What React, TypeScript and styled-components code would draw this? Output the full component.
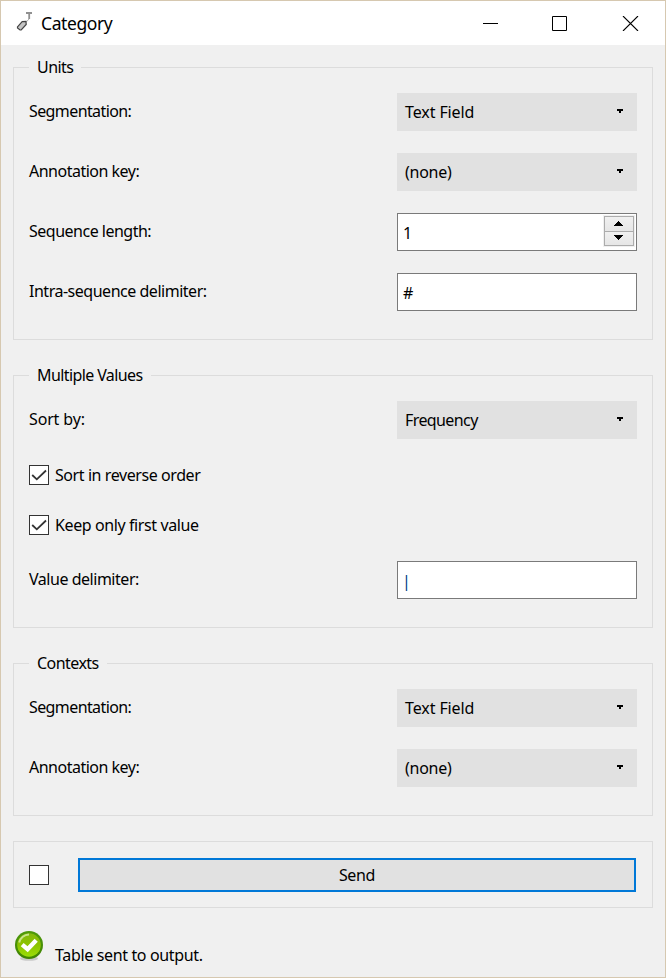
import React, { ReactNode } from "react";
import styled, { createGlobalStyle, css } from "styled-components";

const GlobalStyle = createGlobalStyle`
  *, *::before, *::after { box-sizing: border-box; }
  body { margin: 0; background: #f0f0f0; }
`;

const Window = styled.div`
  width: 666px;
  height: 978px;
  display: flex;
  flex-direction: column;
  border: 1px solid #d6c8b0;
  background: #f0f0f0;
  color: #000;
  font: 16px/20px "Noto Sans", "Open Sans", sans-serif;
  overflow: hidden;
`;

const TitleBar = styled.header`
  flex: none;
  height: 44px;
  display: flex;
  align-items: center;
  background: #fff;
  padding: 0 26px 2px 15px;
`;

const Title = styled.h1`
  flex: 1;
  margin: 2px 0 0 8px;
  font-size: 17.5px;
  line-height: 24px;
  font-weight: 400;
  letter-spacing: -0.4px;
`;

const WindowControls = styled.div`
  display: flex;
  align-items: center;
  gap: 54px;
  margin-top: 3px;
  svg:last-child { margin-left: 1px; }
`;

const Content = styled.main`
  flex: 1;
  display: flex;
  flex-direction: column;
  padding: 22px 12px 0;
`;

const Frame = styled.section<{ $height: number; $after: number }>`
  flex: none;
  height: ${(p) => p.$height}px;
  margin-bottom: ${(p) => p.$after}px;
  border: 1px solid #dcdcdc;
  padding: 0 15px;
`;

const Legend = styled.h2<{ $spacing: number }>`
  width: fit-content;
  height: 20px;
  margin: -11px 0 16px;
  padding: 0 8px;
  background: #f0f0f0;
  font-size: 16px;
  font-weight: 400;
  letter-spacing: ${(p) => p.$spacing}px;
  white-space: nowrap;
`;

const Row = styled.div`
  display: flex;
  align-items: center;
  height: 38px;
  & + & { margin-top: 22px; }
`;

const Label = styled.span<{ $spacing: number }>`
  flex: 1;
  margin-top: -2px;
  letter-spacing: ${(p) => p.$spacing}px;
  white-space: nowrap;
`;

const fieldBox = css`
  width: 240px;
  height: 38px;
  display: flex;
  align-items: center;
`;

const Combo = styled.div<{ $spacing: number }>`
  ${fieldBox}
  justify-content: space-between;
  padding: 0 13px 0 8px;
  background: #e1e1e1;
  letter-spacing: ${(p) => p.$spacing}px;
  svg { margin-bottom: 2px; }
`;

const Edit = styled.div`
  ${fieldBox}
  justify-content: space-between;
  border: 1px solid #7a7a7a;
  background: #fff;
  padding: 2px 1px 0 5px;
`;

const PipeEdit = styled(Edit)`
  padding: 1px 1px 0 4px;
  color: #003a85;
`;

const Spinner = styled.div`
  width: 32px;
  height: 32px;
  margin-top: -5px;
  display: flex;
  flex-direction: column;
  border: 1px solid #f0f0f0;
`;

const SpinButton = styled.button`
  flex: none;
  height: 16px;
  display: flex;
  align-items: center;
  justify-content: center;
  padding: 0;
  border: 1px solid #acacac;
  background: linear-gradient(#f0f0f0, #e6e6e6);
  & + & { height: 15px; margin-top: -1px; padding-bottom: 2px; }
`;

const CheckRow = styled.label<{ $before: number; $spacing: number }>`
  display: flex;
  align-items: center;
  gap: 6px;
  height: 20px;
  margin-top: ${(p) => p.$before}px;
  letter-spacing: ${(p) => p.$spacing}px;
  white-space: nowrap;
`;

const Box = styled.span`
  flex: none;
  width: 20px;
  height: 20px;
  border: 1px solid #333;
  background: #fff;
  display: block;
  svg { display: block; }
`;

const DelimiterRow = styled(Row)`
  margin-top: 26px;
`;

const SendFrame = styled(Frame)`
  display: flex;
  align-items: center;
  gap: 29px;
  padding: 0 16px 0 15px;
`;

const SendButton = styled.button`
  flex: 1;
  height: 34px;
  padding: 0;
  border: 2px solid #0078d7;
  background: #e1e1e1;
  color: #000;
  font: inherit;
  letter-spacing: -0.35px;
`;

const Status = styled.footer`
  display: flex;
  align-items: flex-start;
  gap: 10px;
  padding-left: 2px;
  letter-spacing: -0.35px;
  p { margin: 14px 0 0; }
`;

const ToolIcon = () => (
  <svg width="17" height="20" viewBox="0 0 17 20">
    <path d="M10 1h6" stroke="#909090" strokeWidth="2" />
    <path d="M13.2 2v5" stroke="#909090" strokeWidth="1.8" />
    <path d="M13 7L10.5 9.8" stroke="#b0b0b0" strokeWidth="1" />
    <path d="M1.5 14.8L6.2 9.7L10 9.4L10.2 12.5L5.2 18L4 18L1.5 16Z" fill="#c4c4c4" stroke="#444" strokeWidth="1.2" />
  </svg>
);

const DropArrow = () => (
  <svg width="8" height="6" viewBox="0 0 8 6" shapeRendering="crispEdges">
    <path d="M1 1h6v2h-2v2h-2v-2h-2z" />
  </svg>
);

const SpinArrow = ({ down = false }: { down?: boolean }) => (
  <svg width="10" height="5" viewBox="0 0 10 5" shapeRendering="crispEdges">
    <path d={down ? "M0 0h9v1h-1v1h-1v1h-1v1h-1v1h-1v-1h-1v-1h-1v-1h-1v-1h-1z" : "M4 0h1v1h1v1h1v1h1v1h1v1h-9v-1h1v-1h1v-1h1v-1h1z"} />
  </svg>
);

const Tick = () => (
  <svg width="18" height="18" viewBox="0 0 18 18">
    <path d="M2.2 9L6.8 13.3L16 4.5" fill="none" stroke="#333" strokeWidth="1.8" />
  </svg>
);

const OkIcon = () => (
  <svg width="30" height="32" viewBox="0 0 30 32">
    <defs>
      <linearGradient id="ring" x2="0" y2="1">
        <stop stopColor="#4f9a0b" />
        <stop offset="1" stopColor="#3f8303" />
      </linearGradient>
      <linearGradient id="face" x2="0" y2="1">
        <stop stopColor="#83b80c" />
        <stop offset=".5" stopColor="#8dc400" />
        <stop offset="1" stopColor="#9ade08" />
      </linearGradient>
    </defs>
    <ellipse cx="14" cy="27.5" rx="9" ry="2.3" fill="#000" opacity=".16" />
    <circle cx="14" cy="14" r="14" fill="url(#ring)" />
    <circle cx="14" cy="14" r="11.8" fill="url(#face)" />
    <path d="M4.2 11.5A10.4 10.4 0 0 1 14 3.4" fill="none" stroke="#c9e58a" strokeWidth="2" />
    <path d="M7.2 13.6L12.6 18.2L21.2 9.2" fill="none" stroke="#fff" strokeWidth="4.4" />
  </svg>
);

const CheckBox = ({ checked = false }: { checked?: boolean }) => <Box>{checked && <Tick />}</Box>;

type FieldProps = { label: string; spacing: number; children: ReactNode };

const Field = ({ label, spacing, children }: FieldProps) => (
  <Row>
    <Label $spacing={spacing}>{label}</Label>
    {children}
  </Row>
);

const Select = ({ value, spacing }: { value: string; spacing: number }) => (
  <Combo $spacing={spacing}>
    <span>{value}</span>
    <DropArrow />
  </Combo>
);

export default function App() {
  return (
    <>
      <GlobalStyle />
      <Window>
        <TitleBar>
          <ToolIcon />
          <Title>Category</Title>
          <WindowControls>
            <svg width="15" height="15" shapeRendering="crispEdges"><path d="M0 7.5h15" stroke="#000" /></svg>
            <svg width="15" height="15"><path d="M.5.5h14v14h-14z" fill="none" stroke="#000" /></svg>
            <svg width="17" height="15"><path d="M1 0L16 15M16 0L1 15" stroke="#000" strokeWidth="1.1" /></svg>
          </WindowControls>
        </TitleBar>
        <Content>
          <Frame $height={273} $after={35}>
            <Legend $spacing={-0.55}>Units</Legend>
            <Field label="Segmentation:" spacing={-0.6}><Select value="Text Field" spacing={-0.1} /></Field>
            <Field label="Annotation key:" spacing={-0.5}><Select value="(none)" spacing={-0.25} /></Field>
            <Field label="Sequence length:" spacing={-0.5}>
              <Edit>
                <span>1</span>
                <Spinner>
                  <SpinButton aria-label="Increase"><SpinArrow /></SpinButton>
                  <SpinButton aria-label="Decrease"><SpinArrow down /></SpinButton>
                </Spinner>
              </Edit>
            </Field>
            <Field label="Intra-sequence delimiter:" spacing={-0.48}><Edit>#</Edit></Field>
          </Frame>
          <Frame $height={253} $after={35}>
            <Legend $spacing={-0.6}>Multiple Values</Legend>
            <Field label="Sort by:" spacing={-0.15}><Select value="Frequency" spacing={-0.6} /></Field>
            <CheckRow $before={26} $spacing={-0.42}><CheckBox checked />Sort in reverse order</CheckRow>
            <CheckRow $before={30} $spacing={-0.4}><CheckBox checked />Keep only first value</CheckRow>
            <DelimiterRow>
              <Label $spacing={-0.47}>Value delimiter:</Label>
              <PipeEdit>|</PipeEdit>
            </DelimiterRow>
          </Frame>
          <Frame $height={153} $after={25}>
            <Legend $spacing={-0.55}>Contexts</Legend>
            <Field label="Segmentation:" spacing={-0.6}><Select value="Text Field" spacing={-0.1} /></Field>
            <Field label="Annotation key:" spacing={-0.5}><Select value="(none)" spacing={-0.25} /></Field>
          </Frame>
          <SendFrame $height={67} $after={23}>
            <CheckBox />
            <SendButton>Send</SendButton>
          </SendFrame>
          <Status>
            <OkIcon />
            <p>Table sent to output.</p>
          </Status>
        </Content>
      </Window>
    </>
  );
}
